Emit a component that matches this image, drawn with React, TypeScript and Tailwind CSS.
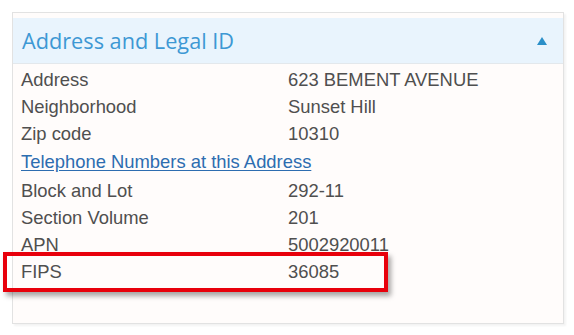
const rows: { label: string; value?: string; link?: boolean }[] = [
  { label: "Address", value: "623 BEMENT AVENUE" },
  { label: "Neighborhood", value: "Sunset Hill" },
  { label: "Zip code", value: "10310" },
  { label: "Telephone Numbers at this Address", link: true },
  { label: "Block and Lot", value: "292-11" },
  { label: "Section Volume", value: "201" },
  { label: "APN", value: "5002920011" },
  { label: "FIPS", value: "36085" },
];

export default function App() {
  return (
    <div className="relative w-[574px] h-[335px] bg-white pt-[12px] pl-[12px] font-['Liberation_Sans',Arial,sans-serif]">
      <div className="w-[552px] h-[312px] border border-[#e2e2e2] bg-[#fffcfb] pt-[5px] shadow-[2px_2px_2px_rgba(0,0,0,0.05)]">
        <div className="h-[46px] bg-[#e9f4fd] border-b border-[#e3e8ec] flex items-center justify-between pl-[9px] pr-[16px]">
          <h2 className="font-['Open_Sans',sans-serif] text-[21.7px] text-[#3d98d4] leading-none">
            Address and Legal ID
          </h2>
          <svg width="10" height="8" viewBox="0 0 10 8">
            <polygon points="5,0 10,8 0,8" fill="#2b8fc8" />
          </svg>
        </div>
        <div className="pl-[8px] pt-[2px] text-[18.4px] text-[#4f4f4f]">
          {rows.map((r) =>
            r.link ? (
              <div key={r.label} className="h-[30px] flex items-center">
                <a href="#" className="text-[#2d6db0] underline underline-offset-2">
                  {r.label}
                </a>
              </div>
            ) : (
              <div key={r.label} className="h-[27px] flex items-center">
                <span className="w-[267px]">{r.label}</span>
                <span>{r.value}</span>
              </div>
            )
          )}
        </div>
      </div>
      <div className="absolute left-[3px] top-[252px] w-[385px] h-[40px] border-[4px] border-[#e8000b] shadow-[3px_4px_5px_rgba(0,0,0,0.35)]" />
    </div>
  );
}
